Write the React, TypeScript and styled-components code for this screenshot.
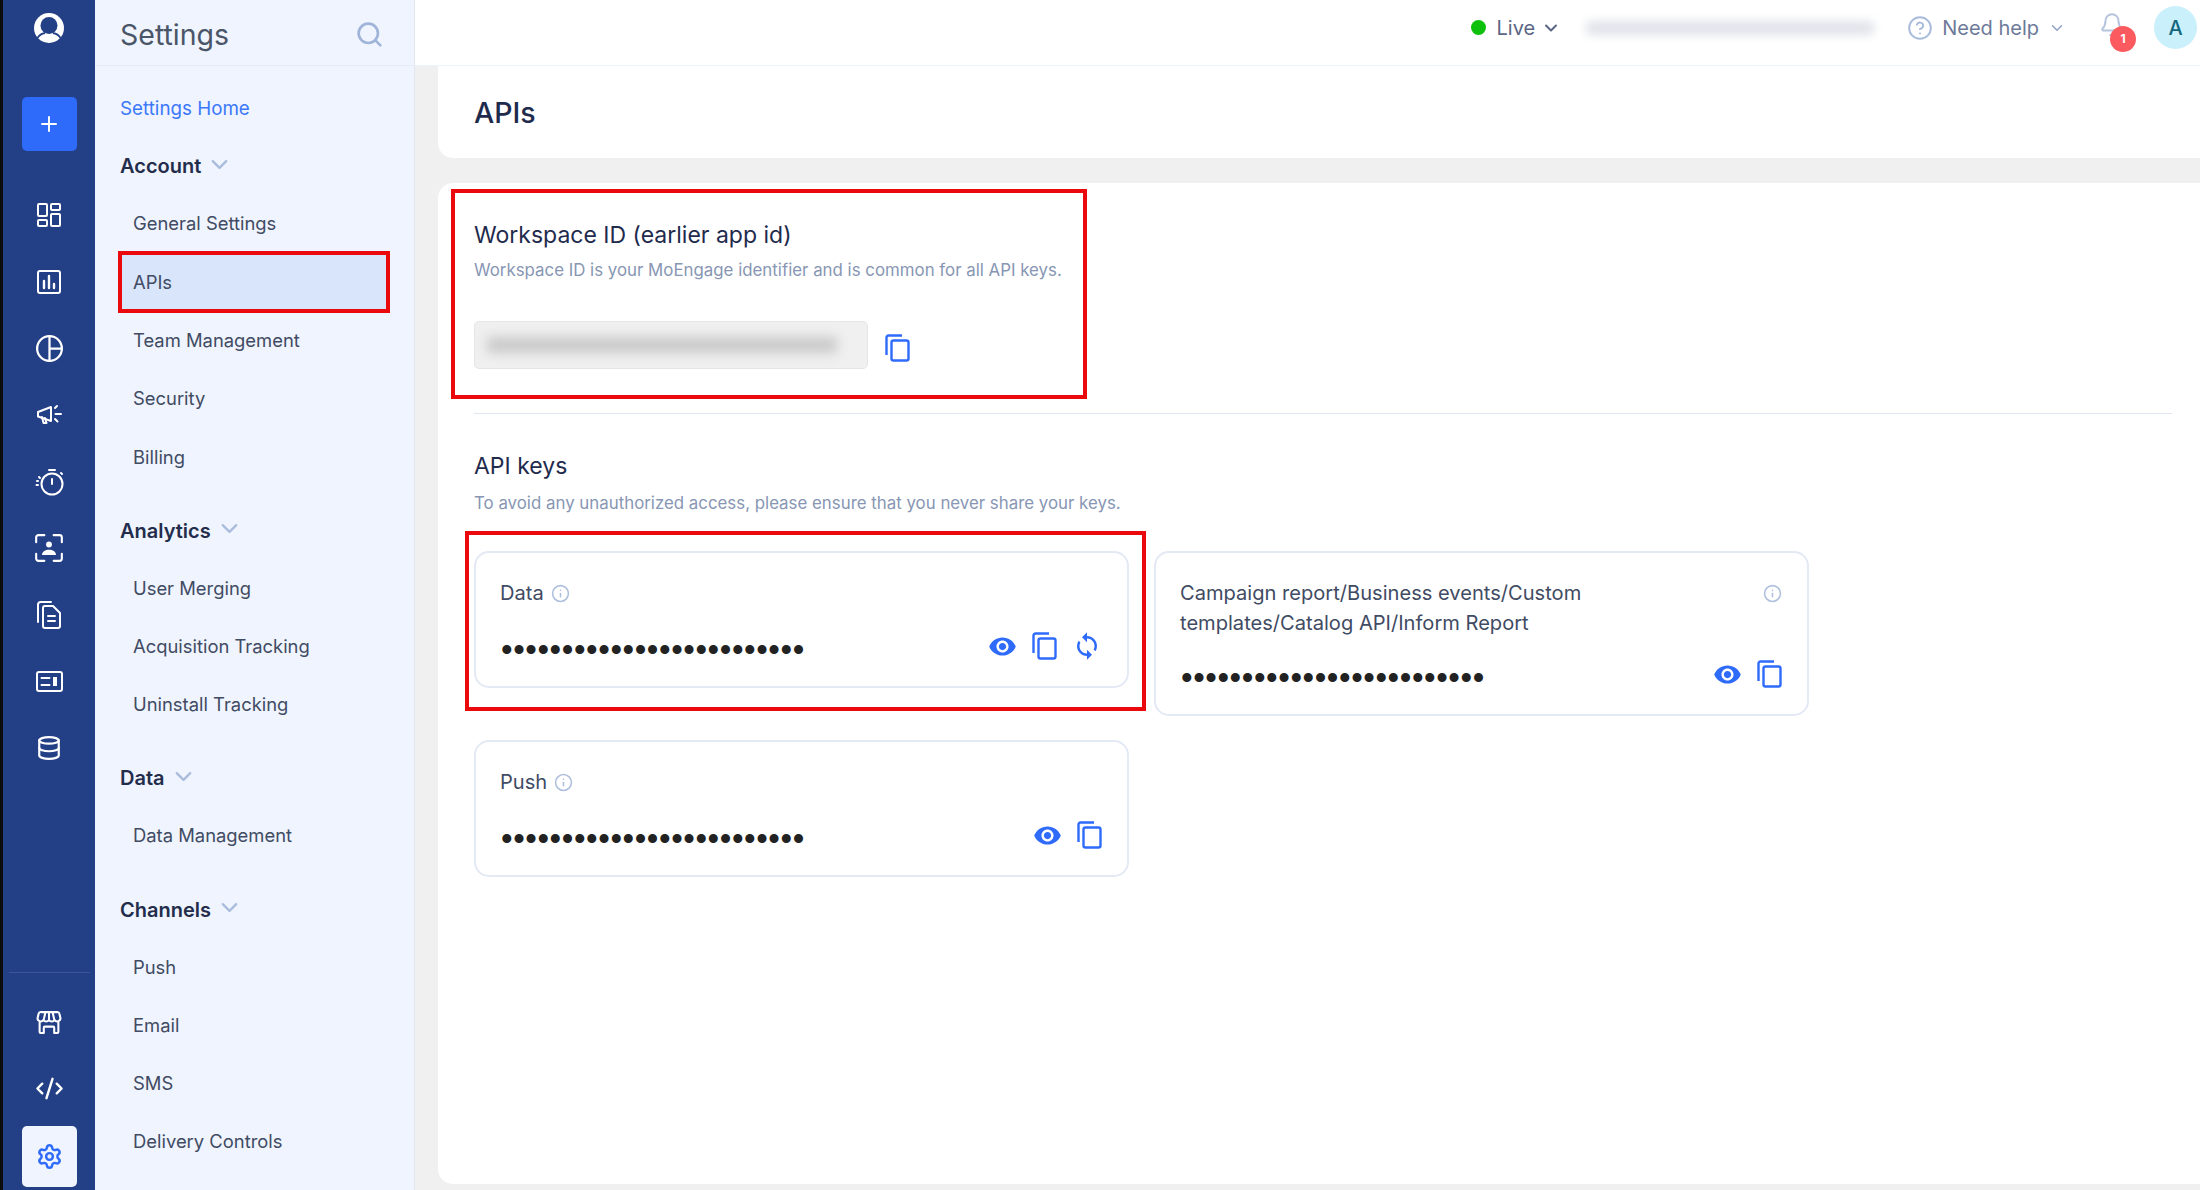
import React from 'react';
import styled, { createGlobalStyle } from 'styled-components';
import { Plus, Database, CodeXml, Settings as Gear, Search, ChevronDown, CircleHelp, Bell, Info } from 'lucide-react';
import { MdVisibility, MdSync } from 'react-icons/md';

const GlobalStyle = createGlobalStyle`
  html, body {
    margin: 0;
    padding: 0;
    background: #f0f0f0;
  }
  * {
    box-sizing: border-box;
  }
`;

const Page = styled.div`
  display: flex;
  width: 2200px;
  height: 1190px;
  overflow: hidden;
  font-family: Inter, "Noto Sans", sans-serif;
  color: #1f2b4d;
`;

const Rail = styled.nav`
  width: 95px;
  flex-shrink: 0;
  display: flex;
  flex-direction: column;
  align-items: center;
  background: #233f86;
  border-left: 3px solid #0c0c0c;
  color: #ffffff;
`;

const RailLogo = styled.div`
  height: 56px;
  display: flex;
  align-items: center;
  justify-content: center;
`;

const RailButton = styled.div<{ $light?: boolean }>`
  width: 55px;
  display: flex;
  align-items: center;
  justify-content: center;
  height: ${(p) => (p.$light ? '61px' : '54px')};
  margin-top: ${(p) => (p.$light ? '4px' : '41px')};
  margin-bottom: ${(p) => (p.$light ? '3px' : '31px')};
  border-radius: 5px;
  background: ${(p) => (p.$light ? '#eff4fe' : '#2e6bfa')};
  color: ${(p) => (p.$light ? '#2e6bfa' : '#ffffff')};
`;

const RailItem = styled.div`
  width: 100%;
  height: 66.6px;
  display: flex;
  align-items: center;
  justify-content: center;
`;

const RailBottom = styled.div`
  margin-top: auto;
  width: 100%;
  display: flex;
  flex-direction: column;
  align-items: center;
`;

const RailDivider = styled.div`
  width: 81px;
  height: 1px;
  margin-bottom: 16px;
  background: #3c5597;
`;

const Sidebar = styled.aside`
  width: 320px;
  flex-shrink: 0;
  background: #eff4fe;
  border-right: 1px solid #e2e6ee;
`;

const SidebarHead = styled.div`
  height: 66px;
  display: flex;
  align-items: center;
  justify-content: space-between;
  padding: 3px 30px 0 25px;
  border-bottom: 1px solid #e6ebf5;
  font-size: 28.5px;
  font-weight: 400;
  color: #4b5568;
`;

const SideNav = styled.div`
  padding: 13px 24px 0 23px;
`;

const HomeLink = styled.div`
  height: 58.3px;
  display: flex;
  align-items: center;
  padding-left: 2px;
  font-size: 18.8px;
  color: #3c78fb;
`;

const SectionHead = styled.div<{ $first?: boolean }>`
  height: 56.8px;
  display: flex;
  align-items: center;
  gap: 5px;
  padding-left: 2px;
  margin-top: ${(p) => (p.$first ? '0.75px' : '16px')};
  font-size: 20px;
  font-weight: 600;
  color: #232d4b;
`;

const SectionChevron = styled(ChevronDown)`
  color: #a9bcdc;
  margin-top: -4px;
`;

const NavItem = styled.div<{ $active?: boolean }>`
  display: flex;
  align-items: center;
  font-size: 18.4px;
  color: #414b63;
  height: ${(p) => (p.$active ? '62px' : '58.3px')};
  margin: ${(p) => (p.$active ? '-1.85px 0' : '0')};
  padding-left: ${(p) => (p.$active ? '11px' : '15px')};
  padding-bottom: ${(p) => (p.$active ? '0' : '1px')};
  background: ${(p) => (p.$active ? '#d8e5fb' : 'transparent')};
  border: ${(p) => (p.$active ? '4px solid #ea0a0e' : 'none')};
`;

const Content = styled.div`
  flex: 1;
  min-width: 0;
  display: flex;
  flex-direction: column;
`;

const TopBar = styled.header`
  height: 66px;
  flex-shrink: 0;
  display: flex;
  align-items: center;
  justify-content: flex-end;
  padding: 0 3px 10px 0;
  background: #ffffff;
  border-bottom: 1px solid #eef3fb;
  font-size: 20px;
  color: #5a6684;
`;

const LiveGroup = styled.div`
  display: flex;
  align-items: center;
  margin-right: 24px;
`;

const LiveDot = styled.span`
  width: 15px;
  height: 15px;
  margin-right: 10px;
  border-radius: 50%;
  background: #0cc00c;
`;

const LiveChevron = styled(ChevronDown)`
  margin-left: 6px;
`;

const OrgName = styled.div`
  width: 290px;
  height: 14px;
  margin-right: 32px;
  border-radius: 7px;
  background: #e0e3ea;
  filter: blur(5px);
`;

const HelpGroup = styled.div`
  display: flex;
  align-items: center;
  gap: 9px;
  margin-right: 33px;
  color: #6d7a99;
`;

const HelpChevron = styled(ChevronDown)`
  color: #8fa3c8;
`;

const BellWrap = styled.div`
  position: relative;
  width: 26px;
  height: 26px;
  margin: -6px 29px 0 0;
  color: #b4c3de;
`;

const BellBadge = styled.span`
  position: absolute;
  left: 11px;
  top: 14px;
  width: 26px;
  height: 26px;
  display: flex;
  align-items: center;
  justify-content: center;
  border-radius: 50%;
  background: #fb5a5f;
  color: #ffffff;
  font-size: 12px;
  font-weight: 700;
`;

const Avatar = styled.div`
  width: 43px;
  height: 43px;
  display: flex;
  align-items: center;
  justify-content: center;
  border-radius: 50%;
  background: #c9f0fb;
  color: #14667f;
  font-size: 20px;
  font-weight: 500;
`;

const Body = styled.main`
  flex: 1;
  min-height: 0;
  display: flex;
  flex-direction: column;
  gap: 25px;
  padding: 0 0 6px 23px;
`;

const TitleCard = styled.div`
  height: 92px;
  flex-shrink: 0;
  display: flex;
  align-items: center;
  padding-left: 36px;
  background: #ffffff;
  border-radius: 0 0 0 15px;
  font-size: 28.5px;
  font-weight: 500;
  color: #1f2b4d;
`;

const MainCard = styled.section`
  position: relative;
  flex: 1;
  padding: 36px 28px 0 36px;
  background: #ffffff;
  border-radius: 15px 0 0 15px;
`;

const Mark = styled.div<{ $top: number; $left: number; $width: number; $height: number }>`
  position: absolute;
  top: ${(p) => p.$top}px;
  left: ${(p) => p.$left}px;
  width: ${(p) => p.$width}px;
  height: ${(p) => p.$height}px;
  border: 4px solid #ea0a0e;
  pointer-events: none;
`;

const SectionTitle = styled.h2`
  margin: 0;
  height: 32px;
  line-height: 32px;
  font-size: 23px;
  font-weight: 400;
  color: #1f2b4d;
`;

const SectionNote = styled.p<{ $gap: number }>`
  margin: ${(p) => p.$gap}px 0 0;
  height: 24px;
  line-height: 24px;
  font-size: 16.85px;
  color: #8796b3;
`;

const IdRow = styled.div`
  display: flex;
  align-items: center;
  gap: 17px;
  margin-top: 39px;
`;

const IdField = styled.div`
  width: 394px;
  height: 48px;
  display: flex;
  align-items: center;
  padding-left: 12px;
  background: #f0f0f0;
  border: 1px solid #e6e6e6;
  border-radius: 5px;
`;

const IdBlur = styled.div`
  width: 350px;
  height: 16px;
  background: #c9c9c9;
  filter: blur(6px);
`;

const IdCopy = styled.span`
  display: flex;
  margin-top: 6px;
`;

const Divider = styled.hr`
  margin: 44px 0 36px;
  border: none;
  height: 1px;
  background: #dfe5f1;
`;

const KeyGrid = styled.div`
  display: grid;
  grid-template-columns: 655px 655px;
  gap: 24px 25px;
  align-items: start;
  margin-top: 36px;
`;

const KeyCard = styled.div`
  padding: 25px 25px 26px 24px;
  background: #ffffff;
  border: 2px solid #e3e9f5;
  border-radius: 15px;
`;

const KeyHead = styled.div<{ $spread?: boolean }>`
  display: flex;
  align-items: ${(p) => (p.$spread ? 'flex-start' : 'center')};
  justify-content: ${(p) => (p.$spread ? 'space-between' : 'flex-start')};
  gap: 7px;
  line-height: 30px;
  font-size: 20.1px;
  color: #414b63;
`;

const KeyTitle = styled.span`
  max-width: 440px;
`;

const InfoMark = styled(Info)<{ $spread?: boolean }>`
  color: #afc0de;
  margin-top: ${(p) => (p.$spread ? '6px' : '0')};
`;

const KeyRow = styled.div<{ $tight?: boolean }>`
  display: flex;
  align-items: center;
  justify-content: space-between;
  height: 28px;
  margin-top: ${(p) => (p.$tight ? '22px' : '24px')};
`;

const Dots = styled.span`
  padding: 7px 0 0 1px;
  font-family: "Liberation Sans", Arial, sans-serif;
  font-size: 33px;
  line-height: 28px;
  letter-spacing: 0.6px;
  color: #222222;
`;

const Actions = styled.div`
  display: flex;
  align-items: center;
  gap: 15px;
  color: #2e6bfa;
`;

const CopyIcon = () => (
  <svg width="25" height="28" viewBox="0 0 25 28" fill="none" stroke="#2e6bfa" strokeWidth="2.4">
    <path d="M1.5 21V3.5a2 2 0 0 1 2-2H17" />
    <rect x="6.5" y="6.5" width="17" height="20" rx="2" />
  </svg>
);

const KeyActions = ({ sync }: { sync?: boolean }) => (
  <Actions>
    <MdVisibility size={29} />
    <CopyIcon />
    {sync && <MdSync size={30} />}
  </Actions>
);

const stroke = { fill: 'none', stroke: 'currentColor', strokeWidth: 2, strokeLinecap: 'round', strokeLinejoin: 'round' } as const;

const LogoIcon = () => (
  <svg width="30" height="30" viewBox="0 0 30 30">
    <circle cx="15" cy="15" r="15" fill="#ffffff" />
    <circle cx="15" cy="12.500" r="8.500" fill="#233f86" />
    <path d="M3.500 25c1.800-3 4.500-4.500 7.500-5M26.500 25c-1.800-3-4.500-4.500-7.500-5" fill="none" stroke="#233f86" strokeWidth="1.800" />
  </svg>
);

const DashIcon = () => (
  <svg width="24" height="24" viewBox="0 0 24 24" {...stroke} strokeLinecap="butt">
    <rect x="1" y="1" width="9" height="12" rx="1" />
    <rect x="14" y="1" width="9" height="6" rx="1" />
    <rect x="1" y="17" width="9" height="6" rx="1" />
    <rect x="14" y="11" width="9" height="12" rx="1" />
  </svg>
);

const ChartIcon = () => (
  <svg width="24" height="24" viewBox="0 0 24 24" {...stroke}>
    <rect x="1" y="1" width="22" height="22" rx="2" />
    <path d="M7 11v7M12 6v12M17 14v4" strokeWidth="2.400" />
  </svg>
);

const PieIcon = () => (
  <svg width="27" height="27" viewBox="0 0 24 24" {...stroke}>
    <circle cx="12" cy="12" r="11" />
    <path d="M12 1v22M12 12h11" />
  </svg>
);

const MegaphoneIcon = () => (
  <svg width="27" height="22" viewBox="0 0 27 22" {...stroke}>
    <path d="M2 8l13-5v14L2 12.500z" />
    <path d="M6 13l1.500 6h3l-1.500-5" />
    <path d="M19 4l2-2M19.500 10H25M19 15l2.500 2.500" />
  </svg>
);

const TimerIcon = () => (
  <svg width="29" height="28" viewBox="0 0 29 28" {...stroke}>
    <circle cx="17" cy="16" r="10.500" />
    <path d="M17 11v5M14 2h6M26 5l1 1M2 13h1M1.500 17h1.500M4 9l1 1" />
  </svg>
);

const PersonFrameIcon = () => (
  <svg width="28" height="28" viewBox="0 0 24 24" {...stroke} strokeWidth="1.800">
    <path d="M1 7V3a2 2 0 0 1 2-2h5M16 1h5a2 2 0 0 1 2 2v4M23 17v4a2 2 0 0 1-2 2h-5M8 23H3a2 2 0 0 1-2-2v-4" />
    <circle cx="12" cy="9" r="2.500" fill="currentColor" stroke="none" />
    <path d="M6 18c0-3 3-4.500 6-4.500s6 1.500 6 4.500z" fill="currentColor" stroke="none" />
  </svg>
);

const FilesIcon = () => (
  <svg width="26" height="28" viewBox="0 0 26 28" {...stroke}>
    <path d="M2 21V3.500A2.500 2.500 0 0 1 4.500 1H15" />
    <path d="M7 7a2 2 0 0 1 2-2h8l7 7v13a2 2 0 0 1-2 2H9a2 2 0 0 1-2-2z" />
    <path d="M12 15h7M12 20h7" />
  </svg>
);

const CardIcon = () => (
  <svg width="27" height="21" viewBox="0 0 27 21" {...stroke}>
    <rect x="1" y="1" width="25" height="19" rx="2" />
    <path d="M5.500 7h8M5.500 14h8" />
    <rect x="17" y="6" width="4" height="9" fill="currentColor" stroke="none" />
  </svg>
);

const StoreIcon = () => (
  <svg width="26" height="25" viewBox="0 0 24 24" {...stroke}>
    <path d="M4 2h16a2 2 0 0 1 2 1.600l1 4.400a3 3 0 0 1-5.500 1.600 3.300 3.300 0 0 1-5.500 0 3.300 3.300 0 0 1-5.500 0A3 3 0 0 1 1 8l1-4.400A2 2 0 0 1 4 2z" />
    <path d="M8.500 2.500L7 9M12 2.500V9M15.500 2.500L17 9" />
    <path d="M3 12v9a1 1 0 0 0 1 1h3v-5a1 1 0 0 1 1-1h8a1 1 0 0 1 1 1v5h3a1 1 0 0 0 1-1v-9" />
  </svg>
);

const accountItems = ['General Settings', 'APIs', 'Team Management', 'Security', 'Billing'];
const analyticsItems = ['User Merging', 'Acquisition Tracking', 'Uninstall Tracking'];
const channelItems = ['Push', 'Email', 'SMS', 'Delivery Controls'];

export default function App() {
  return (
    <Page>
      <GlobalStyle />
      <Rail>
        <RailLogo><LogoIcon /></RailLogo>
        <RailButton><Plus size={24} strokeWidth={2} /></RailButton>
        <RailItem><DashIcon /></RailItem>
        <RailItem><ChartIcon /></RailItem>
        <RailItem><PieIcon /></RailItem>
        <RailItem><MegaphoneIcon /></RailItem>
        <RailItem><TimerIcon /></RailItem>
        <RailItem><PersonFrameIcon /></RailItem>
        <RailItem><FilesIcon /></RailItem>
        <RailItem><CardIcon /></RailItem>
        <RailItem><Database size={26} strokeWidth={2} /></RailItem>
        <RailBottom>
          <RailDivider />
          <RailItem><StoreIcon /></RailItem>
          <RailItem><CodeXml size={29} strokeWidth={2} /></RailItem>
          <RailButton $light><Gear size={27} strokeWidth={2.2} /></RailButton>
        </RailBottom>
      </Rail>

      <Sidebar>
        <SidebarHead>
          Settings
          <Search size={29} color="#9fb4d8" strokeWidth={2.2} />
        </SidebarHead>
        <SideNav>
          <HomeLink>Settings Home</HomeLink>
          <SectionHead $first>Account <SectionChevron size={27} strokeWidth={2} /></SectionHead>
          {accountItems.map((item) => (
            <NavItem key={item} $active={item === 'APIs'}>{item}</NavItem>
          ))}
          <SectionHead>Analytics <SectionChevron size={27} strokeWidth={2} /></SectionHead>
          {analyticsItems.map((item) => (
            <NavItem key={item}>{item}</NavItem>
          ))}
          <SectionHead>Data <SectionChevron size={27} strokeWidth={2} /></SectionHead>
          <NavItem>Data Management</NavItem>
          <SectionHead>Channels <SectionChevron size={27} strokeWidth={2} /></SectionHead>
          {channelItems.map((item) => (
            <NavItem key={item}>{item}</NavItem>
          ))}
        </SideNav>
      </Sidebar>

      <Content>
        <TopBar>
          <LiveGroup>
            <LiveDot />
            Live
            <LiveChevron size={20} strokeWidth={2.4} />
          </LiveGroup>
          <OrgName />
          <HelpGroup>
            <CircleHelp size={26} color="#a9bcdc" strokeWidth={1.8} />
            Need help
            <HelpChevron size={18} />
          </HelpGroup>
          <BellWrap>
            <Bell size={26} strokeWidth={1.8} />
            <BellBadge>1</BellBadge>
          </BellWrap>
          <Avatar>A</Avatar>
        </TopBar>

        <Body>
          <TitleCard>APIs</TitleCard>
          <MainCard>
            <Mark $top={6} $left={13} $width={636} $height={210} />
            <Mark $top={348} $left={27} $width={681} $height={180} />

            <SectionTitle>Workspace ID (earlier app id)</SectionTitle>
            <SectionNote $gap={7}>Workspace ID is your MoEngage identifier and is common for all API keys.</SectionNote>
            <IdRow>
              <IdField><IdBlur /></IdField>
              <IdCopy><CopyIcon /></IdCopy>
            </IdRow>
            <Divider />
            <SectionTitle>API keys</SectionTitle>
            <SectionNote $gap={9}>To avoid any unauthorized access, please ensure that you never share your keys.</SectionNote>

            <KeyGrid>
              <KeyCard>
                <KeyHead>Data <InfoMark size={19} /></KeyHead>
                <KeyRow><Dots>{'•'.repeat(25)}</Dots><KeyActions sync /></KeyRow>
              </KeyCard>
              <KeyCard>
                <KeyHead $spread>
                  <KeyTitle>Campaign report/Business events/Custom templates/Catalog API/Inform Report</KeyTitle>
                  <InfoMark size={19} $spread />
                </KeyHead>
                <KeyRow $tight><Dots>{'•'.repeat(25)}</Dots><KeyActions /></KeyRow>
              </KeyCard>
              <KeyCard>
                <KeyHead>Push <InfoMark size={19} /></KeyHead>
                <KeyRow><Dots>{'•'.repeat(25)}</Dots><KeyActions /></KeyRow>
              </KeyCard>
            </KeyGrid>
          </MainCard>
        </Body>
      </Content>
    </Page>
  );
}
